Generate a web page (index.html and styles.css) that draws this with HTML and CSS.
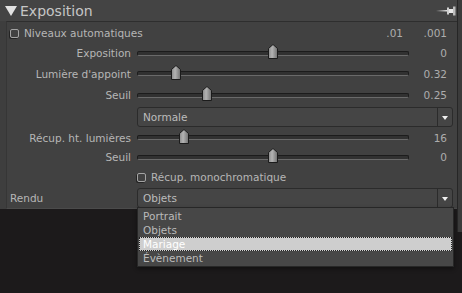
FILE: index.html
```html
<!DOCTYPE html>
<html>
<head>
    <meta charset="utf-8">
    <title>Exposition</title>
    <link rel="stylesheet" href="styles.css">
</head>
<body>
    <svg class="defs" width="0" height="0">
        <defs>
            <linearGradient id="knob-fill" x1="0" x2="1" y1="0" y2="0">
                <stop offset="0" stop-color="#8a8a8a"/>
                <stop offset="0.4" stop-color="#b3b3b3"/>
                <stop offset="1" stop-color="#707070"/>
            </linearGradient>
            <linearGradient id="needle-fill" x1="0" x2="1" y1="0" y2="0">
                <stop offset="0" stop-color="#cfcfcf" stop-opacity="0"/>
                <stop offset="1" stop-color="#e4e4e4"/>
            </linearGradient>
        </defs>
    </svg>

    <div class="window">
        <div class="panel">
            <div class="panel-title">
                <svg class="arrow" width="12" height="10" viewBox="0 0 12 10"><polygon points="0,0 12,0 6,10" fill="#e2e2e2"/></svg>
                <span>Exposition</span>
                <svg class="pin" width="20" height="10" viewBox="0 0 20 10">
                    <rect x="0" y="4" width="11" height="1.5" fill="url(#needle-fill)"/>
                    <rect x="11" y="1.5" width="2" height="7" fill="#cfcfcf"/>
                    <rect x="13" y="3" width="4" height="4" fill="#e8e8e8"/>
                    <rect x="17" y="0.5" width="2.5" height="9" fill="#bcbcbc"/>
                </svg>
            </div>

            <div class="panel-body">
                <div class="row">
                    <label class="check"><span class="box"></span>Niveaux automatiques</label>
                    <span class="step">.01</span>
                    <span class="value">.001</span>
                </div>

                <div class="row">
                    <span class="label">Exposition</span>
                    <div class="slider"><div class="track"></div><svg class="knob" style="left: 50%" width="10" height="15" viewBox="0 0 10 15"><path d="M5 .5 9.5 4.5V14.5H.5V4.5Z" fill="url(#knob-fill)" stroke="#1b1b1b"/></svg></div>
                    <span class="value">0</span>
                </div>

                <div class="row row-21">
                    <span class="label">Lumière d'appoint</span>
                    <div class="slider"><div class="track"></div><svg class="knob" style="left: 14.3%" width="10" height="15" viewBox="0 0 10 15"><path d="M5 .5 9.5 4.5V14.5H.5V4.5Z" fill="url(#knob-fill)" stroke="#1b1b1b"/></svg></div>
                    <span class="value">0.32</span>
                </div>

                <div class="row row-22">
                    <span class="label">Seuil</span>
                    <div class="slider"><div class="track"></div><svg class="knob" style="left: 25.7%" width="10" height="15" viewBox="0 0 10 15"><path d="M5 .5 9.5 4.5V14.5H.5V4.5Z" fill="url(#knob-fill)" stroke="#1b1b1b"/></svg></div>
                    <span class="value">0.25</span>
                </div>

                <div class="row row-22">
                    <div class="combo">
                        <span class="combo-text">Normale</span>
                        <span class="combo-arrow"></span>
                    </div>
                </div>

                <div class="row row-19">
                    <span class="label">Récup. ht. lumières</span>
                    <div class="slider"><div class="track"></div><svg class="knob" style="left: 17.3%" width="10" height="15" viewBox="0 0 10 15"><path d="M5 .5 9.5 4.5V14.5H.5V4.5Z" fill="url(#knob-fill)" stroke="#1b1b1b"/></svg></div>
                    <span class="value">16</span>
                </div>

                <div class="row">
                    <span class="label">Seuil</span>
                    <div class="slider"><div class="track"></div><svg class="knob" style="left: 50%" width="10" height="15" viewBox="0 0 10 15"><path d="M5 .5 9.5 4.5V14.5H.5V4.5Z" fill="url(#knob-fill)" stroke="#1b1b1b"/></svg></div>
                    <span class="value">0</span>
                </div>

                <div class="row">
                    <label class="check check-wide"><span class="box"></span>Récup. monochromatique</label>
                </div>

                <div class="row row-21">
                    <span class="label label-left">Rendu</span>
                    <div class="combo combo-open">
                        <span class="combo-text">Objets</span>
                        <span class="combo-arrow"></span>
                        <ul class="menu">
                            <li>Portrait</li>
                            <li>Objets</li>
                            <li class="selected">Mariage</li>
                            <li>Évènement</li>
                        </ul>
                    </div>
                </div>
            </div>
        </div>
        <div class="edge"></div>
    </div>
</body>
</html>
```

FILE: styles.css
```css
body {
    margin: 0;
    width: 462px;
    height: 293px;
    overflow: hidden;
    background-color: #1c1a1b;
    font-family: "DejaVu Sans", "Liberation Sans", sans-serif;
    font-size: 10.5px;
    color: #b6b6b6;
}
.defs {
    position: absolute;
}
.window {
    display: flex;
    align-items: flex-start;
}
.panel {
    width: 457px;
    background-color: #3e3e3e;
}
.edge {
    width: 4px;
    height: 232px;
    background-color: #3b3b3b;
    border-left: 1px solid #262626;
}
.panel-title {
    height: 21px;
    display: flex;
    align-items: center;
    padding-left: 5px;
    background-color: #444;
    font-size: 14px;
    color: #c6c6c6;
}
.arrow {
    margin-right: 3px;
}
.pin {
    margin-left: auto;
    margin-right: 1px;
}
.panel-body {
    margin-left: 6px;
    padding: 1px 0 0 3px;
    background-color: #414141;
    border-top: 1px solid #2e2e2e;
    border-left: 1px solid #363636;
    border-bottom: 1px solid #4b4b4b;
}
.row {
    display: grid;
    grid-template-columns: 127px 272px 38px;
    align-items: center;
    height: 20px;
}
.row-19 { height: 19px; }
.row-21 { height: 21px; }
.row-22 { height: 22px; }
.label {
    text-align: right;
    padding-right: 6px;
    white-space: nowrap;
}
.label-left {
    text-align: left;
}
.value {
    text-align: right;
    color: #adadad;
}
.step {
    text-align: right;
    padding-right: 6px;
    color: #adadad;
}
.check {
    display: flex;
    align-items: center;
    white-space: nowrap;
}
.check-wide {
    grid-column: 2 / span 2;
}
.box {
    flex-shrink: 0;
    width: 9px;
    height: 9px;
    box-sizing: border-box;
    border: 1px solid #a3a3a3;
    border-radius: 2px;
    margin-right: 5px;
    box-shadow: -1px 1px 0 rgba(0,0,0,0.45);
}
.slider {
    position: relative;
    height: 100%;
    display: flex;
    align-items: center;
}
.track {
    width: 100%;
    height: 5px;
    box-sizing: border-box;
    background-color: #313131;
    border: 1px solid #1c1c1c;
    border-bottom-color: #6a6a6a;
    border-radius: 2px;
}
.knob {
    position: absolute;
    top: calc(50% - 9px);
    margin-left: -5px;
}
.combo {
    grid-column: 2 / span 2;
    margin-right: -6px;
    position: relative;
    height: 20px;
    box-sizing: border-box;
    display: flex;
    align-items: center;
    background-color: #454545;
    border: 1px solid #2b2b2b;
    border-radius: 3px;
}
.combo-open {
    align-self: start;
    margin-top: 1px;
}
.combo-text {
    flex: 1;
    padding-left: 5px;
    color: #bcbcbc;
}
.combo-arrow {
    width: 14px;
    height: 100%;
    border-left: 1px solid #2b2b2b;
    display: flex;
    align-items: center;
    justify-content: center;
}
.combo-arrow::after {
    content: "";
    border-left: 3.5px solid transparent;
    border-right: 3.5px solid transparent;
    border-top: 4px solid #f0f0f0;
    margin-top: 1px;
}
.menu {
    position: absolute;
    top: 100%;
    left: -1px;
    width: 317px;
    box-sizing: border-box;
    margin: 0;
    padding: 1px 0;
    list-style: none;
    background-color: #474747;
    border: 1px solid #272727;
    box-shadow: 0 2px 4px rgba(0,0,0,0.4);
}
.menu li {
    height: 14px;
    line-height: 14px;
    padding-left: 5px;
    color: #bababa;
}
.menu .selected {
    margin: 0 1px;
    padding-left: 3px;
    box-sizing: border-box;
    background-color: #cecece;
    border: 1px dotted #222;
    line-height: 12px;
    color: #fff;
}
```
